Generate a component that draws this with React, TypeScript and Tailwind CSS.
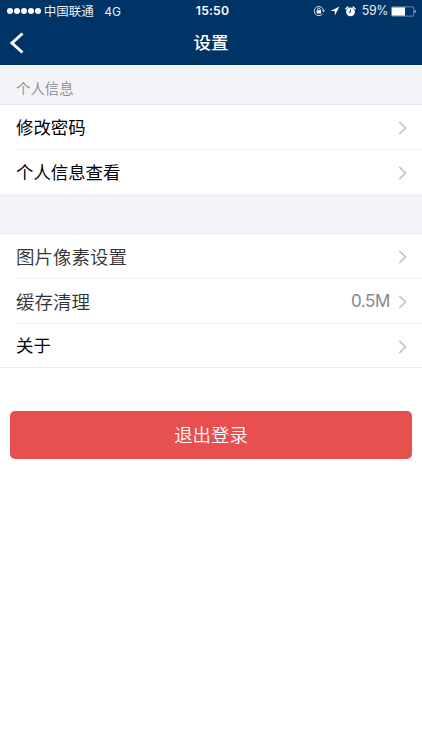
import clsx from "clsx"

type Row = {
  label: string
  value?: string
  large?: boolean
}

const accountRows: Row[] = [{ label: "修改密码" }, { label: "个人信息查看" }]

const generalRows: Row[] = [
  { label: "图片像素设置", large: true },
  { label: "缓存清理", value: "0.5M", large: true },
  { label: "关于" },
]

function StatusBar() {
  return (
    <div className="grid h-[22px] grid-cols-[1fr_auto_1fr] items-center pl-[7px] pr-[6px] text-[12.5px] leading-none text-[#e9eff6]">
      <div className="flex items-center">
        <div className="flex gap-[1.2px]">
          {[0, 1, 2, 3, 4].map((dot) => (
            <span key={dot} className="size-[5.9px] rounded-full bg-white" />
          ))}
        </div>
        <span className="ml-[2.5px] pt-[2px]">中国联通</span>
        <span className="ml-[10.5px] pt-px text-[12px]">4G</span>
      </div>

      <span className="pl-[2px] pt-px text-[12.2px] font-semibold tracking-[0.2px] text-white">15:50</span>

      <div className="flex items-center justify-end">
        <svg width="12" height="12" viewBox="0 0 12 12" fill="none">
          <path d="M10.4 5.3A4.6 4.6 0 1 0 9.6 8.7" stroke="#dce6f0" strokeWidth="0.9" />
          <path d="M9 5.2h3l-1.5 2z" fill="#dce6f0" />
          <rect x="3.6" y="5.2" width="4.4" height="3.2" rx="0.4" fill="#fff" />
          <path d="M4.5 5.5V4.4a1.3 1.3 0 0 1 2.6 0v1.1" stroke="#fff" strokeWidth="0.8" />
        </svg>
        <svg className="ml-[5px]" width="10" height="10" viewBox="0 0 10 10">
          <path d="M9.4 0.5 0.6 5h4.2v4.5z" fill="#fff" />
        </svg>
        <svg className="ml-[5px]" width="11" height="11" viewBox="0 0 11 11" fill="none">
          <circle cx="5.5" cy="5.9" r="4.4" fill="#fff" />
          <path d="M0.9 2.8 2.9 1M10.1 2.8 8.1 1" stroke="#fff" strokeWidth="1.4" strokeLinecap="round" />
          <path d="M5.5 3.5v2.700H3.700" stroke="#003366" strokeWidth="0.9" />
        </svg>
        <span className="ml-[5.5px] pt-px text-[12.4px] tracking-[-0.400px]">59%</span>
        <svg className="ml-[3px]" width="25" height="11" viewBox="0 0 25 11" fill="none">
          <rect x="0.5" y="0.9" width="22.3" height="9.2" rx="1" stroke="#9cb2c9" strokeWidth="0.7" />
          <rect x="1" y="1.4" width="13" height="8.2" fill="#fff" />
          <path d="M23.6 4v3c1-.3 1.2-.8 1.2-1.5S24.6 4.3 23.6 4z" fill="#c5d3e1" />
        </svg>
      </div>
    </div>
  )
}

function NavBar() {
  return (
    <div className="grid h-[43px] grid-cols-[1fr_auto_1fr] items-center pb-px">
      <button type="button" aria-label="返回" className="pl-[9px]">
        <svg width="16" height="22" viewBox="0 0 16 22" fill="none">
          <path d="M13.5 1.5 3 11l10.5 9.5" stroke="#fff" strokeWidth="3" />
        </svg>
      </button>
      <h1 className="text-[17.5px] font-medium leading-none text-white">设置</h1>
    </div>
  )
}

function Chevron() {
  return (
    <svg width="10" height="14" viewBox="0 0 10 14" fill="none">
      <path d="M1.2 0.9 7.5 7l-6.3 6.1" stroke="#c7c7cc" strokeWidth="1.8" />
    </svg>
  )
}

function RowList({ rows }: { rows: Row[] }) {
  return (
    <ul className="border-b border-[#ececf0] bg-white">
      {rows.map((row, i) => (
        <li key={row.label} className="pl-4">
          <div
            className={clsx(
              "flex items-center pr-[14px] pt-[2px]",
              i > 0 ? "border-t border-[#efeff2]" : "",
              i === 1 ? "h-[45px]" : "h-[44px]"
            )}
          >
            <span
              className={
                row.large
                  ? "pt-px text-[18.5px] font-[350] text-[#333]"
                  : "text-[17.4px] text-black"
              }
            >
              {row.label}
            </span>
            <span className="ml-auto mr-[8px] text-[17px] tracking-[-0.4px] text-[#888]">
              {row.value}
            </span>
            <Chevron />
          </div>
        </li>
      ))}
    </ul>
  )
}

export default function App() {
  return (
    <div className="h-[750px] w-full bg-white font-['Inter','Noto_Sans_CJK_SC',sans-serif]">
      <header className="bg-[#003366]">
        <StatusBar />
        <NavBar />
      </header>

      <main>
        <h2 className="flex h-[40px] items-center border-b border-[#e9e9ed] bg-[#f3f3f8] pl-4 pt-[9px] text-[14.4px] font-[350] text-[#8a8a8f]">
          个人信息
        </h2>
        <RowList rows={accountRows} />
        <div className="h-[39px] border-b border-[#e9e9ed] bg-[#f3f3f8]" />
        <RowList rows={generalRows} />

        <div className="px-[10.4px] pt-[43px]">
          <button
            type="button"
            className="h-[48px] w-full rounded-[5px] bg-[#e85050] pt-[2px] text-[18.4px] font-[350] text-white"
          >
            退出登录
          </button>
        </div>
      </main>
    </div>
  )
}
